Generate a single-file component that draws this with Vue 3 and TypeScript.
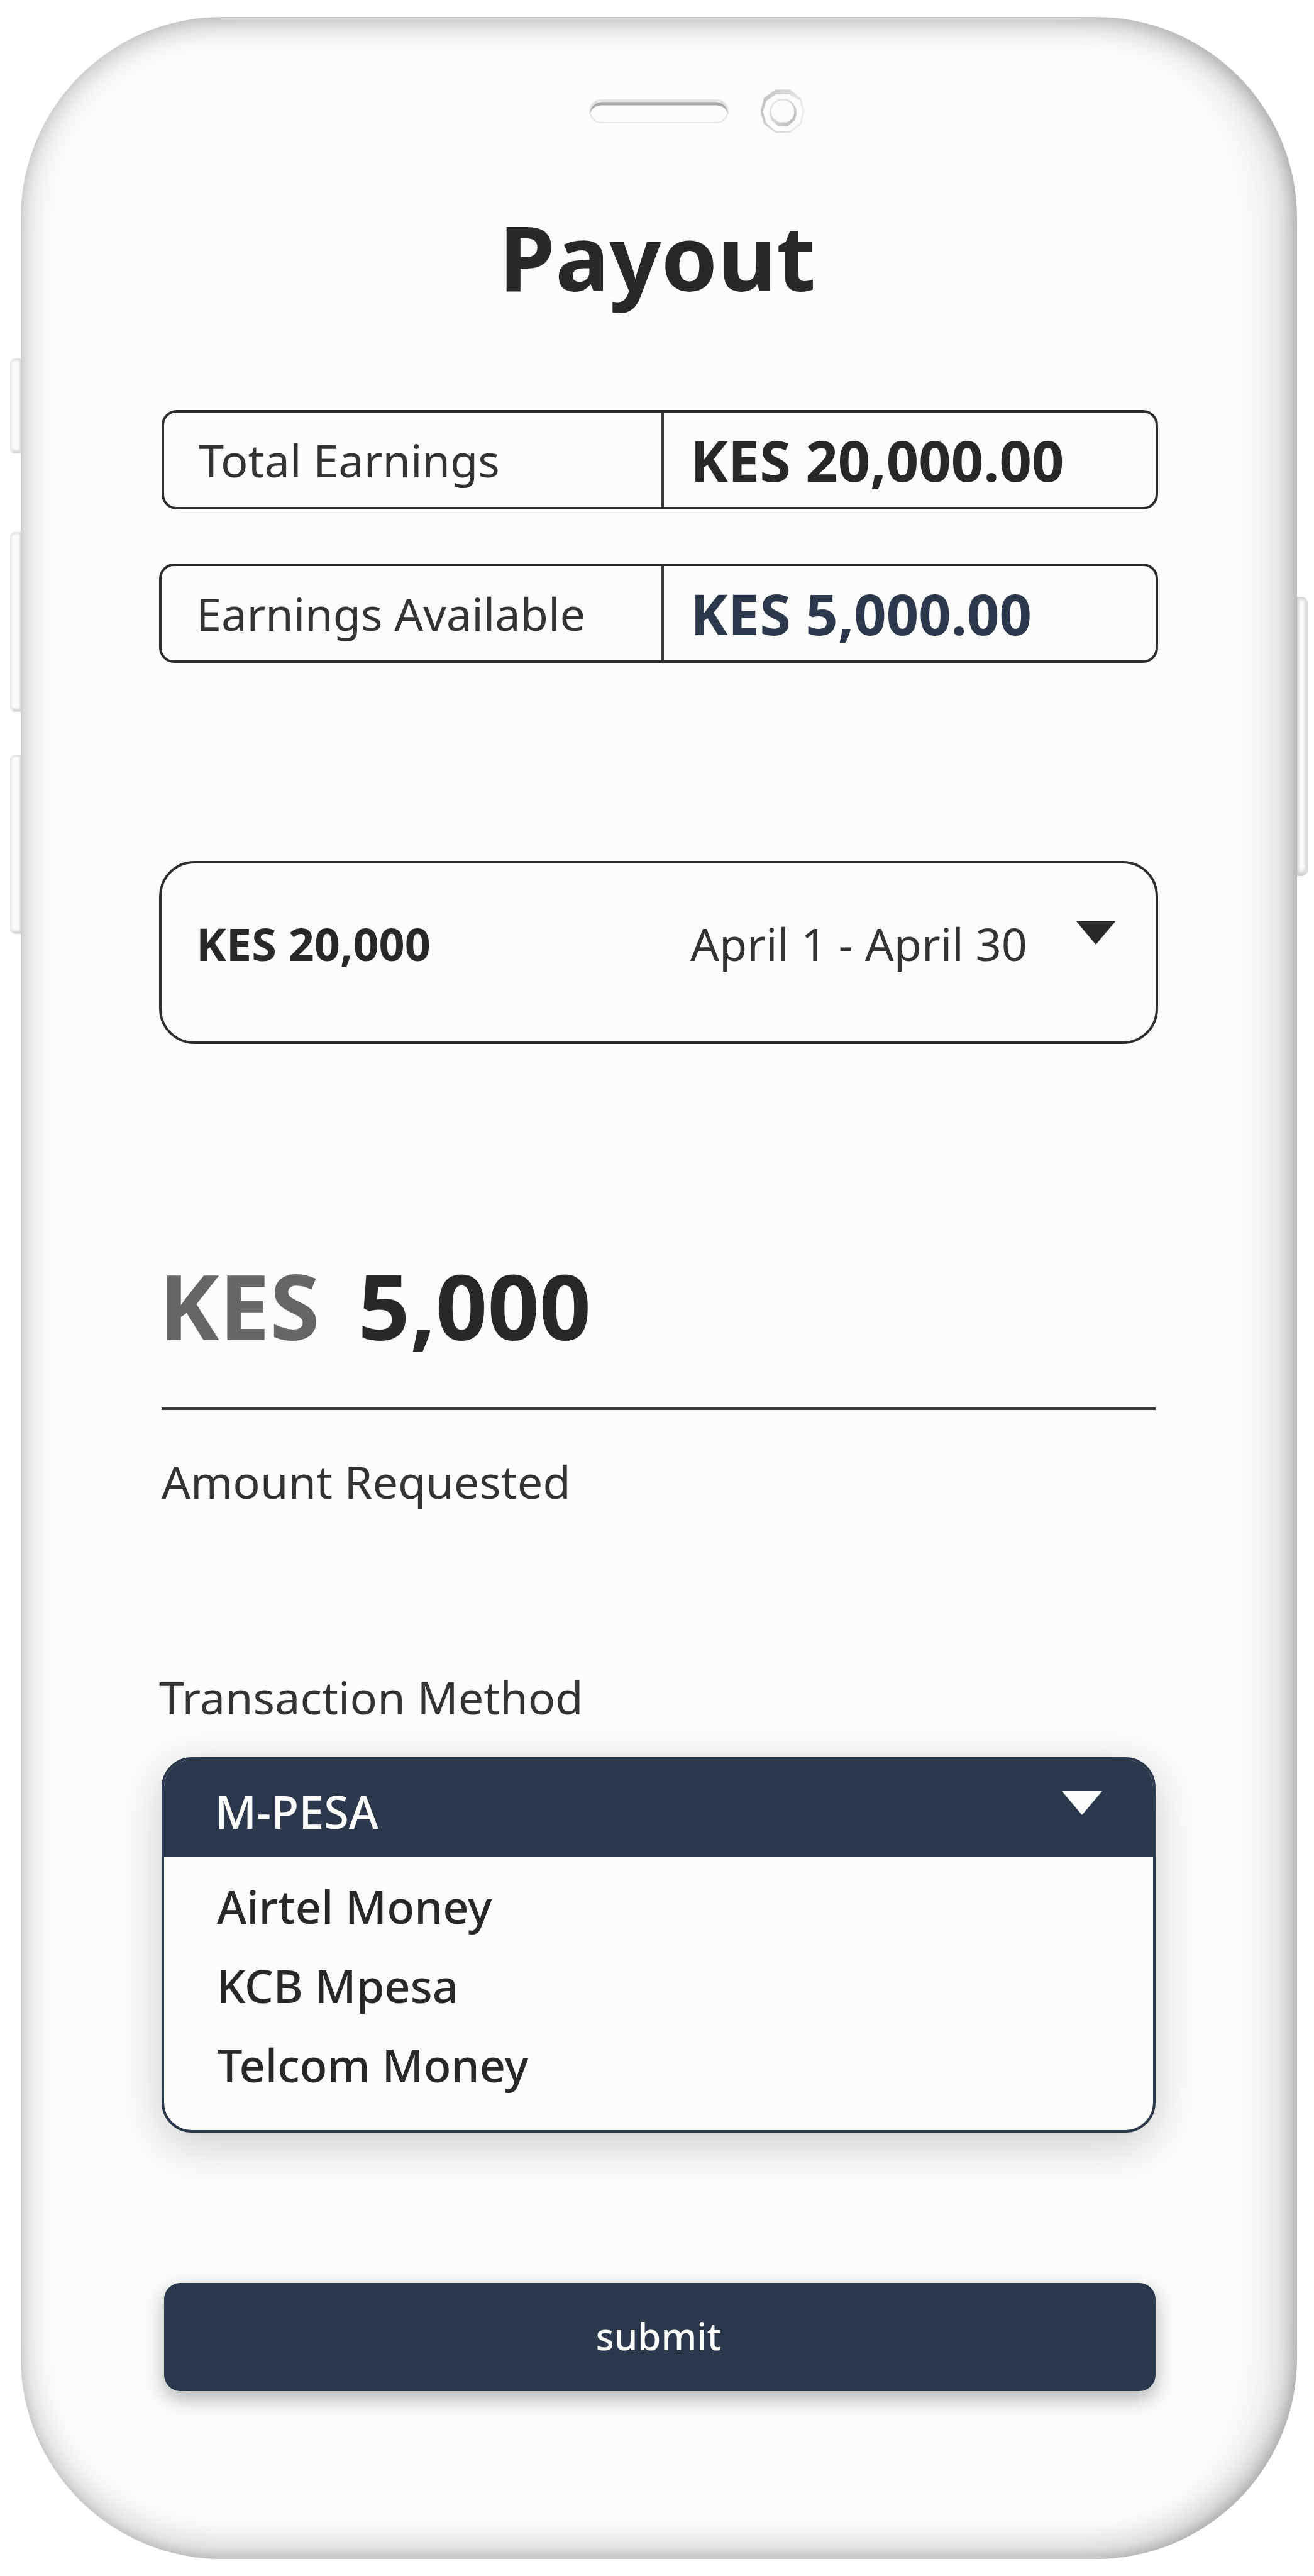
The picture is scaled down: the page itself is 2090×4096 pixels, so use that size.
<script setup lang="ts">
import { ref } from 'vue'

interface Earning {
  label: string
  value: string
  tone: 'total' | 'available'
}

const earnings: Earning[] = [
  { label: 'Total Earnings', value: 'KES 20,000.00', tone: 'total' },
  { label: 'Earnings Available', value: 'KES 5,000.00', tone: 'available' },
]

const periods: string[] = ['April 1 - April 30']
const period = ref<string>(periods[0])
const amount = ref<string>('5,000')

const methods = ref<string[]>(['Airtel Money', 'KCB Mpesa', 'Telcom Money'])
const method = ref<string>('M-PESA')
const open = ref<boolean>(true)

function choose(name: string): void {
  methods.value = methods.value.map((m) => (m === name ? method.value : m))
  method.value = name
}
</script>

<template>
  <div class="stage">
    <div class="keys keys-left" aria-hidden="true">
      <span class="key key-mute"></span>
      <span class="key key-up"></span>
      <span class="key key-down"></span>
    </div>

    <main class="phone">
      <div class="notch" aria-hidden="true">
        <svg class="speaker" width="222" height="38" viewBox="0 0 222 38">
          <defs>
            <linearGradient id="speaker-rim" x1="0" y1="0" x2="0" y2="1">
              <stop offset="0" stop-color="#e2e2e2" />
              <stop offset="1" stop-color="#e8e8e8" />
            </linearGradient>
          </defs>
          <rect x="0" y="0" width="222" height="38" rx="19" fill="url(#speaker-rim)" />
          <path d="M2 20C3 11 10 4.500 20 4.500H202C212 4.500 219 11 220 20Z" fill="#a5a5a5" />
          <path d="M2.500 21C4 14 11 9.500 20 9.500H202C211 9.500 218 14 219.500 21C218 30 211 36 202 36H20C11 36 4 30 2.500 21Z" fill="#fcfcfc" />
        </svg>
        <svg class="camera" width="71" height="71" viewBox="0 0 71 71">
          <defs>
            <linearGradient id="lens-rim" x1="0" y1="0.200" x2="1" y2="0.400">
              <stop offset="0" stop-color="#c2c2c2" />
              <stop offset="1" stop-color="#ececec" />
            </linearGradient>
            <linearGradient id="lens-core" x1="0" y1="0" x2="1" y2="0.800">
              <stop offset="0" stop-color="#eaeaea" />
              <stop offset="1" stop-color="#bcbcbc" />
            </linearGradient>
          </defs>
          <path
            fill="url(#lens-rim)"
            fill-rule="evenodd"
            d="M24.500 1.300L47.400 1.300L65.600 15.700L70.700 35.700L65.600 56.600L47.400 69.900L24.500 69.900L6 56L.6 35.700L6 14.900ZM25 9.100L9.800 19.600L4.500 36.500L9.800 54.800L25.300 67.800L46.800 67.800L63.200 54.800L67.700 35.700L63.200 19L46.200 9.100Z"
          />
          <path
            fill="url(#lens-core)"
            fill-rule="evenodd"
            d="M29 16.500H43L52 22.500L57.500 32L58 40L55 50L44 59.500H29L18 50L14.500 40L15 32L20 22.500ZM30 18.500L21.500 24L17.500 33L18 41L22 48L30 53.500H43L51 47.500L54 40V32L50 24L42.500 18.500Z"
          />
        </svg>
      </div>

      <h1 class="title">Payout</h1>

      <dl class="earnings">
        <div v-for="row in earnings" :key="row.label" class="earning" :class="row.tone">
          <dt>{{ row.label }}</dt>
          <dd>{{ row.value }}</dd>
        </div>
      </dl>

      <div class="period">
        <label class="period-total" for="period">KES 20,000</label>
        <div class="period-pick">
          <select id="period" v-model="period">
            <option v-for="p in periods" :key="p" :value="p">{{ p }}</option>
          </select>
          <svg class="caret" width="62" height="37" viewBox="0 0 62 37" aria-hidden="true">
            <path d="M0 0H62L31 37Z" fill="currentColor" />
          </svg>
        </div>
      </div>

      <div class="amount">
        <span class="currency">KES</span>
        <input id="amount" v-model="amount" type="text" inputmode="decimal" />
      </div>
      <label class="caption amount-caption" for="amount">Amount Requested</label>

      <p id="method-label" class="caption method-caption">Transaction Method</p>
      <div class="dropdown">
        <button
          type="button"
          class="dropdown-head"
          aria-haspopup="listbox"
          aria-labelledby="method-label"
          :aria-expanded="open"
          @click="open = !open"
        >
          <span>{{ method }}</span>
          <svg class="caret" width="64" height="38" viewBox="0 0 64 38" aria-hidden="true">
            <path d="M0 0H64L32 38Z" fill="currentColor" />
          </svg>
        </button>
        <ul v-if="open" class="options">
          <li v-for="m in methods" :key="m">
            <button type="button" @click="choose(m)">{{ m }}</button>
          </li>
        </ul>
      </div>

      <button type="button" class="submit">submit</button>
    </main>

    <div class="keys keys-right" aria-hidden="true">
      <span class="key key-power"></span>
    </div>
  </div>
</template>

<style>
body {
  margin: 0;
  background: #fff;
}
</style>

<style scoped>
.stage {
  display: flex;
  box-sizing: border-box;
  padding: 27px 10px 27px 16px;
  font-family: 'Noto Sans', 'Open Sans', sans-serif;
  color: #282828;
}

.stage *,
.stage *::before {
  box-sizing: border-box;
}

button,
input,
select {
  margin: 0;
  padding: 0;
  border: 0;
  background: none;
  color: inherit;
  font: inherit;
}

button {
  cursor: pointer;
}

/* Hardware keys on both edges of the case */
.keys {
  display: flex;
  flex-direction: column;
}

.keys-left {
  flex: 0 0 17px;
  padding-top: 543px;
}

.keys-right {
  flex: 0 0 17px;
  padding-top: 922px;
}

.key {
  background: #fbfbfb;
}

.keys-left .key {
  border-radius: 8px 0 0 8px;
  box-shadow: inset 3px 0 3px #ededed, inset 0 3px 3px #dcdcdc, inset 0 -4px 4px #c8c8c8;
}

.keys-right .key {
  border-radius: 0 10px 10px 0;
  box-shadow: inset -4px 0 5px #dcdcdc, inset 0 3px 5px #d0d0d0, inset 0 -4px 7px #b4b4b4;
}

.key-mute {
  height: 151px;
}

.key-up {
  height: 286px;
  margin-top: 125px;
}

.key-down {
  height: 285px;
  margin-top: 68px;
}

.key-power {
  height: 444px;
}

.phone {
  display: flex;
  flex: 1;
  flex-direction: column;
  min-width: 0;
  padding: 114px 221px 267px 220px;
  border-radius: 320px;
  background: #fcfcfc;
  box-shadow:
    inset 0 0 60px rgba(0, 0, 0, 0.22),
    inset -12px 0 20px rgba(0, 0, 0, 0.08),
    inset -60px 0 56px rgba(0, 0, 0, 0.06),
    inset 0 20px 24px rgba(0, 0, 0, 0.06),
    inset 0 -44px 40px rgba(0, 0, 0, 0.045),
    inset 0 -8px 14px rgba(0, 0, 0, 0.06);
}

.notch {
  display: grid;
  grid-template-columns: 1fr auto 1fr;
  align-items: center;
  column-gap: 50px;
}

.speaker {
  grid-column: 2;
}

.title {
  margin: 115px 4px 0 0;
  font-size: 144px;
  font-weight: 700;
  line-height: 160px;
  text-align: center;
}

.earnings {
  display: flex;
  flex-direction: column;
  gap: 86px;
  margin: 165px 0 0;
}

.earning {
  display: flex;
  height: 158px;
  border: 4px solid #2c2e2e;
  border-radius: 24px;
}

.earning.total {
  margin-left: 4px;
}

.earning dt,
.earning dd {
  display: flex;
  align-items: center;
  margin: 0;
}

.earning dt {
  flex: 1;
  padding-left: 55px;
  color: #333;
  font-size: 72px;
}

.earning dd {
  flex: 0 0 786px;
  padding-left: 42px;
  border-left: 4px solid #3c3c3c;
  font-size: 90px;
  font-weight: 700;
}

.earning.available dd {
  color: #2b374a;
}

.period {
  display: flex;
  align-items: center;
  justify-content: space-between;
  height: 291px;
  margin-top: 315px;
  padding: 0 64px 30px 55px;
  border: 4px solid #2c2e2e;
  border-radius: 56px;
  font-size: 72px;
}

.period-total {
  font-weight: 700;
}

.period-pick {
  display: grid;
  flex: 0 0 676px;
}

.period-pick select {
  grid-area: 1 / 1;
  appearance: none;
  color: #333;
  line-height: 98px;
}

.period-pick .caret {
  grid-area: 1 / 1;
  align-self: start;
  justify-self: end;
  margin-top: 14px;
  pointer-events: none;
}

.amount {
  display: flex;
  gap: 61px;
  margin: 335px 4px 0 0;
  font-size: 144px;
  font-weight: 700;
  line-height: 160px;
}

.currency {
  color: #666;
}

.amount input {
  flex: 1;
  min-width: 0;
  height: 160px;
}

.caption {
  margin: 0;
  color: #333;
  font-size: 72px;
  line-height: 98px;
}

.amount-caption {
  margin: 83px 4px 0;
  padding-top: 64px;
  border-top: 4px solid #3c3e3e;
}

.method-caption {
  margin-top: 245px;
}

.dropdown {
  margin: 47px 4px 0;
  overflow: hidden;
  border: 4px solid #2b374a;
  border-radius: 48px;
  background: #fcfcfc;
  box-shadow: 0 18px 72px rgba(0, 0, 0, 0.2);
  font-size: 72px;
  font-weight: 500;
}

.dropdown-head {
  display: flex;
  align-items: center;
  justify-content: space-between;
  width: 100%;
  height: 154px;
  padding: 10px 81px 0;
  background: #2b374a;
  color: #fcfcfc;
}

.dropdown-head .caret {
  margin-bottom: 26px;
}

.options {
  margin: 0;
  padding: 16px 0 41px;
  list-style: none;
}

.options button {
  display: block;
  width: 100%;
  padding: 0 84px;
  line-height: 126px;
  text-align: left;
}

.submit {
  height: 172px;
  margin: 239px 4px 0 8px;
  padding: 0 4px 4px 0;
  border-radius: 26px;
  background: #2b374a;
  box-shadow: 0 12px 32px rgba(0, 0, 0, 0.3);
  color: #fcfcfc;
  font-size: 60px;
  font-weight: 500;
}
</style>
